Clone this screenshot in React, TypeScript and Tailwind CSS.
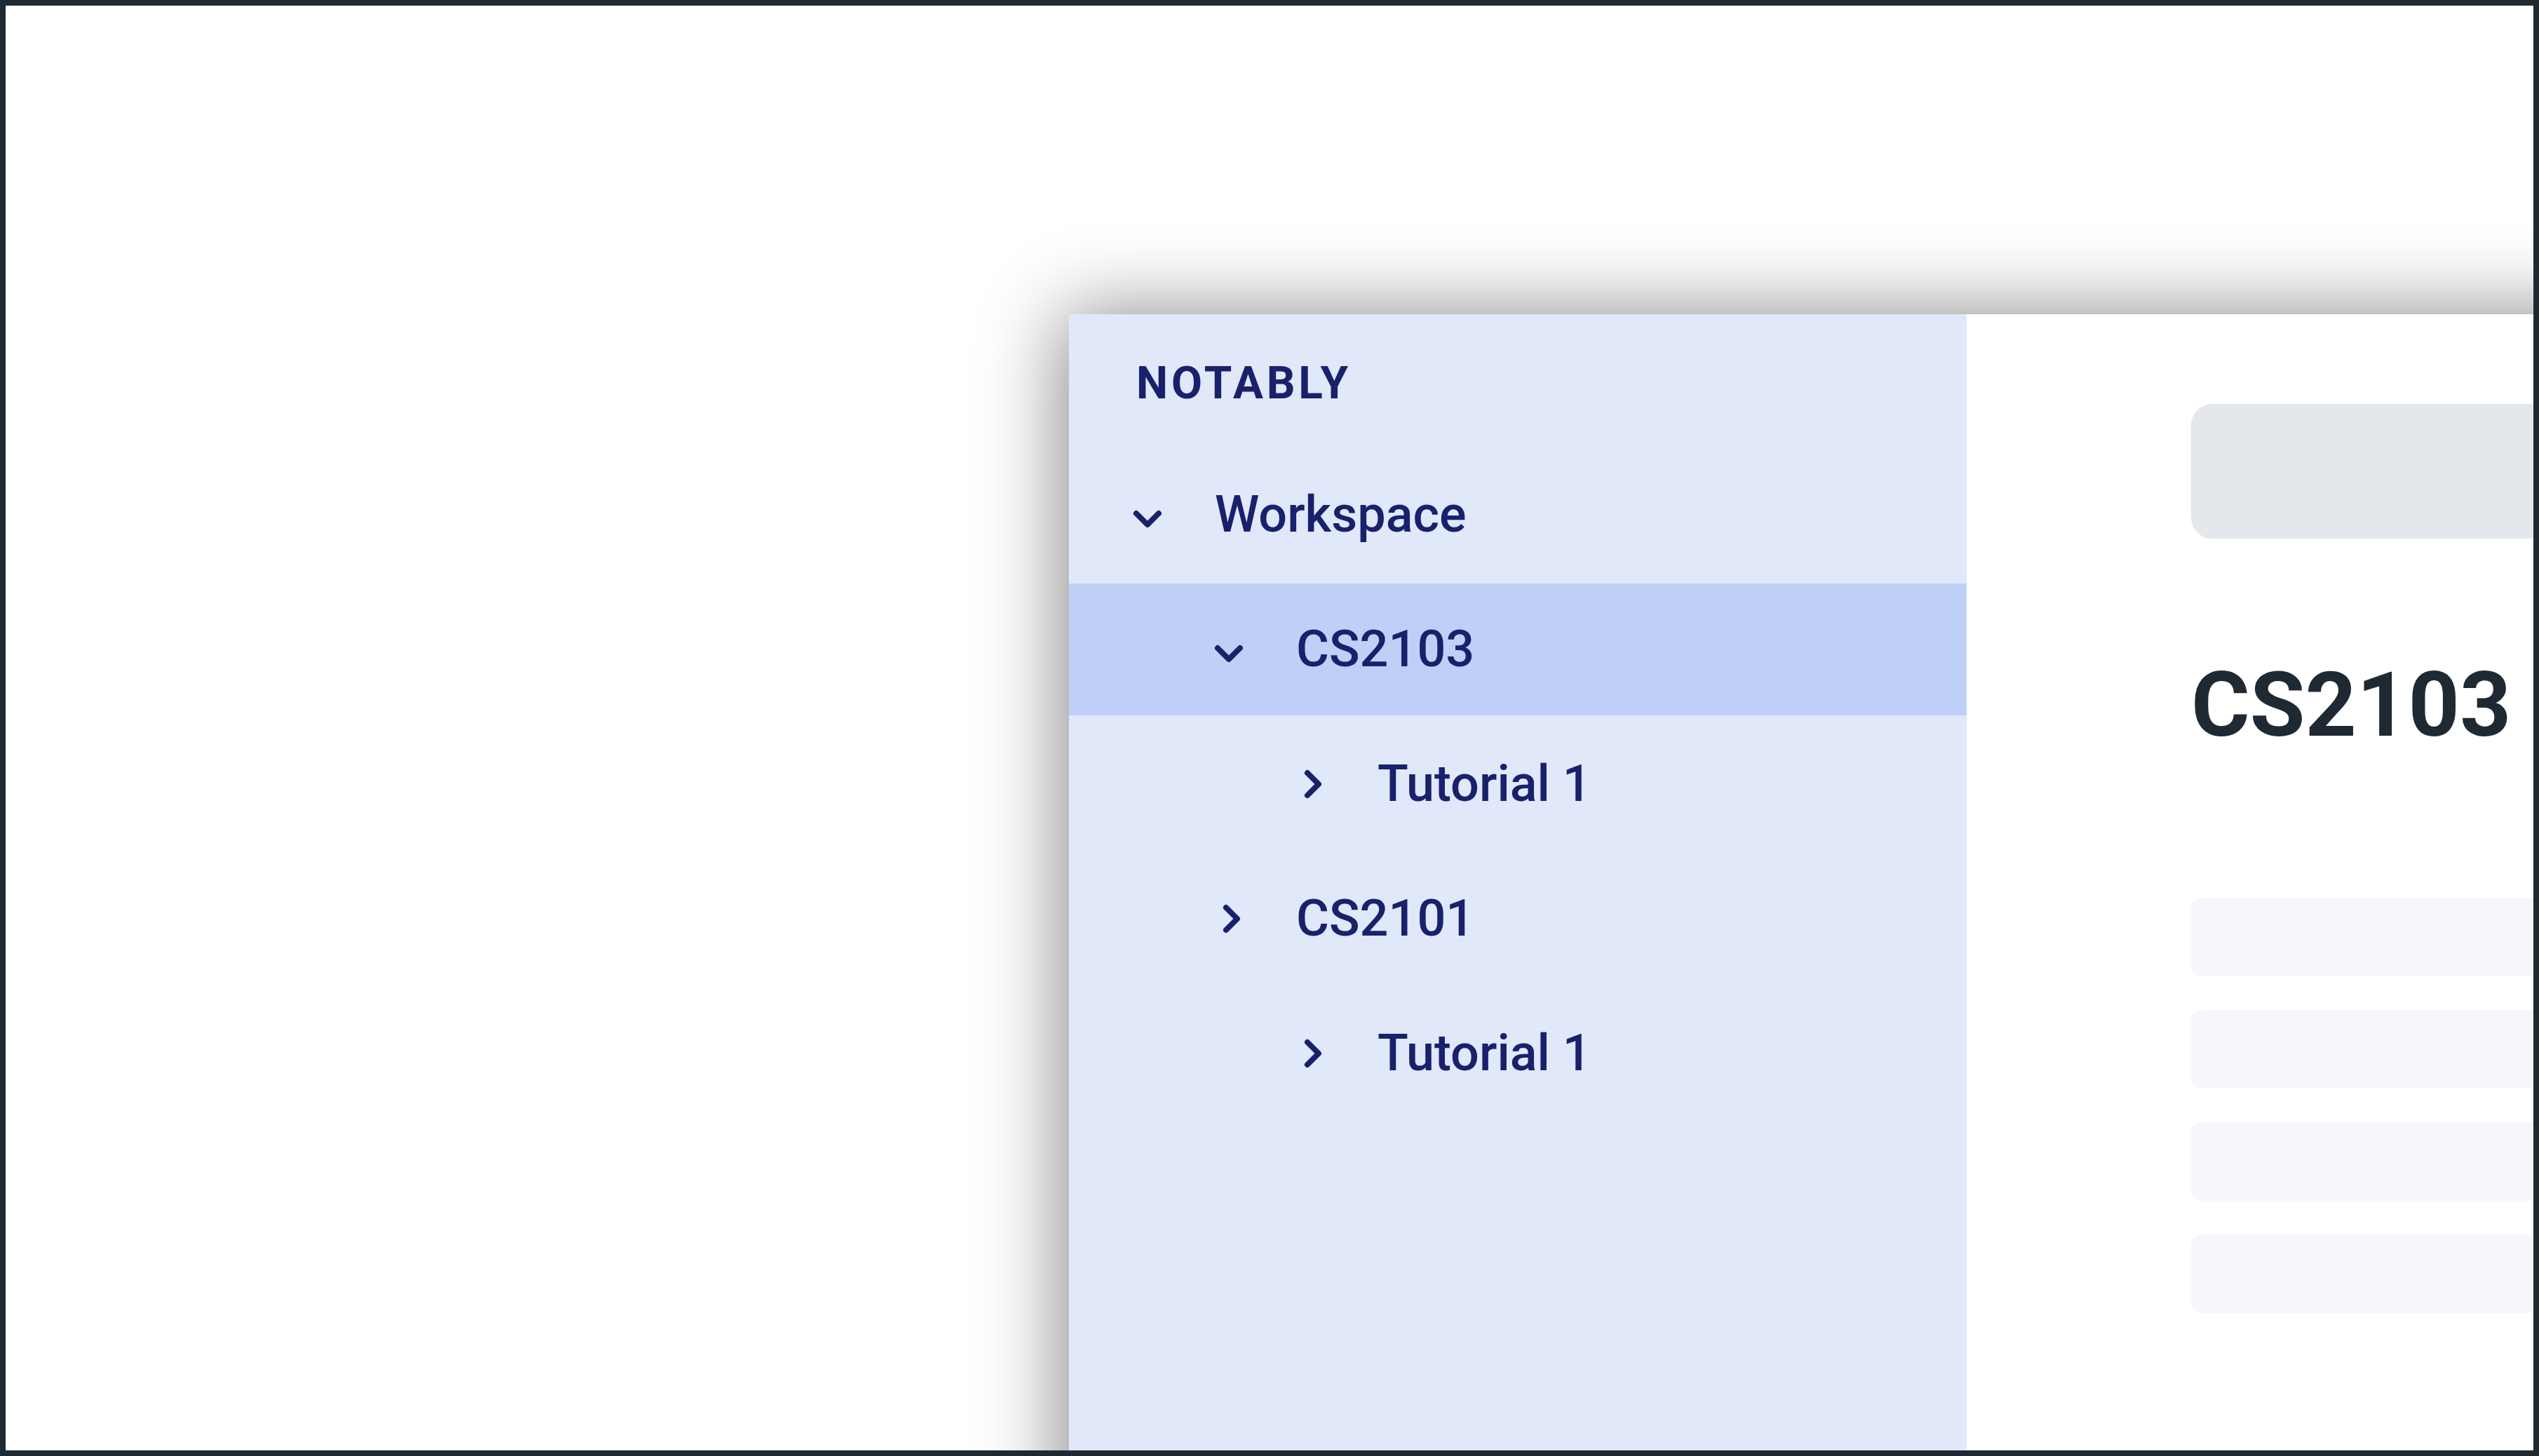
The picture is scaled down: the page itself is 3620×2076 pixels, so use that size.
import React from 'react';
import { ChevronDown, ChevronRight } from 'lucide-react';

type TreeNode = {
  label: string;
  depth: 0 | 1 | 2;
  open: boolean;
  active?: boolean;
};

const tree: TreeNode[] = [
  { label: 'Workspace', depth: 0, open: true },
  { label: 'CS2103', depth: 1, open: true, active: true },
  { label: 'Tutorial 1', depth: 2, open: false },
  { label: 'CS2101', depth: 1, open: false },
  { label: 'Tutorial 1', depth: 2, open: false },
];

const indent = ['pl-[80px]', 'pl-[196px]', 'pl-[312px]'];

const TreeRow: React.FC<{ node: TreeNode }> = ({ node }) => (
  <div
    className={`flex h-[188px] items-center gap-16 ${indent[node.depth]} ${
      node.active ? 'bg-[#bed0f7]' : ''
    }`}
  >
    {node.open ? (
      <ChevronDown size={64} strokeWidth={3} className="shrink-0 translate-y-1.5" />
    ) : (
      <ChevronRight size={64} strokeWidth={3} className="shrink-0 translate-x-1" />
    )}
    <span className="text-[72px] font-medium leading-none whitespace-nowrap">{node.label}</span>
  </div>
);

export default function App() {
  return (
    <div className="h-[2076px] w-full overflow-hidden border-8 border-[#1f2933] bg-white pl-[1516px] pt-[440px] font-['Roboto',sans-serif]">
      <div className="flex h-[1800px] w-[3400px] shadow-[-8px_0_110px_rgba(0,0,0,0.48)]">
        {/* sidebar */}
        <aside className="w-[1280px] shrink-0 bg-[#e0e8f9] pt-[67px] text-[#19216c]">
          <div className="pl-[96px] text-[64px] font-bold leading-none tracking-[0.075em]">NOTABLY</div>
          <nav className="mt-[61px] flex flex-col gap-1">
            {tree.map((node, i) => (
              <TreeRow key={i} node={node} />
            ))}
          </nav>
        </aside>

        {/* note area */}
        <main className="flex-1 bg-white pl-[320px] pt-[128px]">
          <div className="h-[192px] w-[1600px] rounded-[30px] bg-[#e4e7eb]" />
          <h1 className="mt-[173px] text-[128px] font-bold leading-none text-[#1f2933]">CS2103</h1>
          <div className="mt-[211px] flex flex-col gap-12">
            {[0, 1, 2, 3].map((i) => (
              <div key={i} className="h-[112px] w-[1600px] rounded-2xl bg-[#f5f7fa]" />
            ))}
          </div>
        </main>
      </div>
    </div>
  );
}
